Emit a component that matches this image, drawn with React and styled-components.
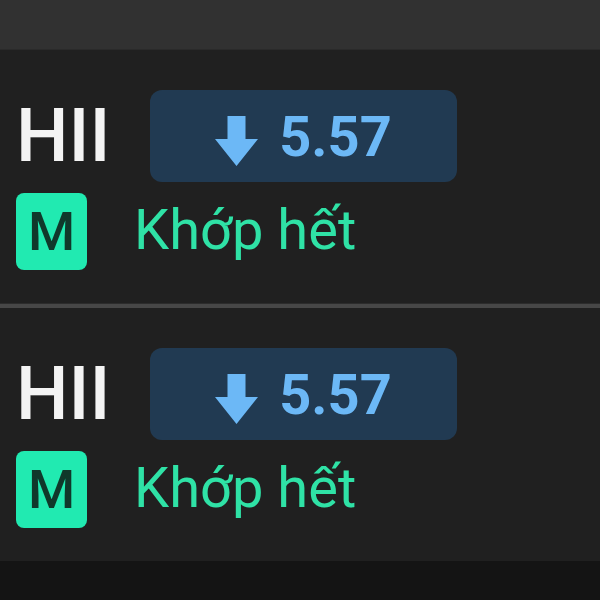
import styled, { createGlobalStyle } from 'styled-components';

const GlobalStyle = createGlobalStyle`
    html, body {
        margin: 0;
        padding: 0;
        background: #141414;
        font-family: Roboto, "Noto Sans", "Liberation Sans", sans-serif;
    }
`;

const Screen = styled.div`
    width: 600px;
    height: 600px;
    display: flex;
    flex-direction: column;
    overflow: hidden;
    background: #141414;
`;
const TopBar = styled.div`
    height: 50px;
    flex-shrink: 0;
    background: #313131;
    border-bottom: 1px solid #2a2a2a;
    box-sizing: border-box;
`;
const Row = styled.div`
    height: 253px;
    flex-shrink: 0;
    box-sizing: border-box;
    padding: 40px 16px 0 16px;
    background: #202020;
    display: flex;
    flex-direction: column;
    gap: 11px;
`;
const Divider = styled.div`
    height: 5px;
    flex-shrink: 0;
    background: #474747;
    border-top: 1px solid #2c2c2c;
    box-sizing: border-box;
`;
const Line = styled.div`
    display: flex;
    align-items: center;
    gap: ${props => props.gap}px;
`;
const Symbol = styled.div`
    font-size: 74px;
    font-weight: 500;
    line-height: 1;
    color: #f4f4f4;
    width: 92px;
    white-space: nowrap;
`;
const PriceBox = styled.div`
    width: 307px;
    height: 92px;
    border-radius: 12px;
    background: #213a52;
    display: flex;
    align-items: center;
    justify-content: center;
    gap: 21px;
    color: #6cb8f6;
`;
const Price = styled.span`
    font-size: 56px;
    font-weight: 700;
    line-height: 1;
    margin-top: 2px;
`;
const TypeBadge = styled.div`
    width: 71px;
    height: 77px;
    border-radius: 8px;
    background: #21eab1;
    color: #10382b;
    font-size: 54px;
    font-weight: 500;
    line-height: 1;
    display: flex;
    align-items: center;
    justify-content: center;
`;
const Status = styled.span`
    font-size: 56px;
    line-height: 1;
    color: #2fe2a6;
    margin-top: -4px;
    margin-left: 2px;
`;
const ArrowIcon = styled.svg`
    margin-top: 9px;
`;

const DownArrow = () => (
    <ArrowIcon width="43" height="50" viewBox="0 0 43 50">
        <path d="M12.5 0 H30.5 V23 H43 L21.5 50 L0 23 H12.5 Z" fill="currentColor" />
    </ArrowIcon>
);

const orders = [
    {id: 1, symbol: 'HII', price: '5.57', type: 'M', status: 'Khớp hết'},
    {id: 2, symbol: 'HII', price: '5.57', type: 'M', status: 'Khớp hết'},
];

export default function App() {
    return (
        <Screen>
            <GlobalStyle />
            <TopBar />
            {orders.map((item, i) => (
                <div key={item.id}>
                    {i > 0 && <Divider />}
                    <Row>
                        <Line gap={42}>
                            <Symbol>{item.symbol}</Symbol>
                            <PriceBox>
                                <DownArrow />
                                <Price>{item.price}</Price>
                            </PriceBox>
                        </Line>
                        <Line gap={45}>
                            <TypeBadge>{item.type}</TypeBadge>
                            <Status>{item.status}</Status>
                        </Line>
                    </Row>
                </div>
            ))}
        </Screen>
    );
}
